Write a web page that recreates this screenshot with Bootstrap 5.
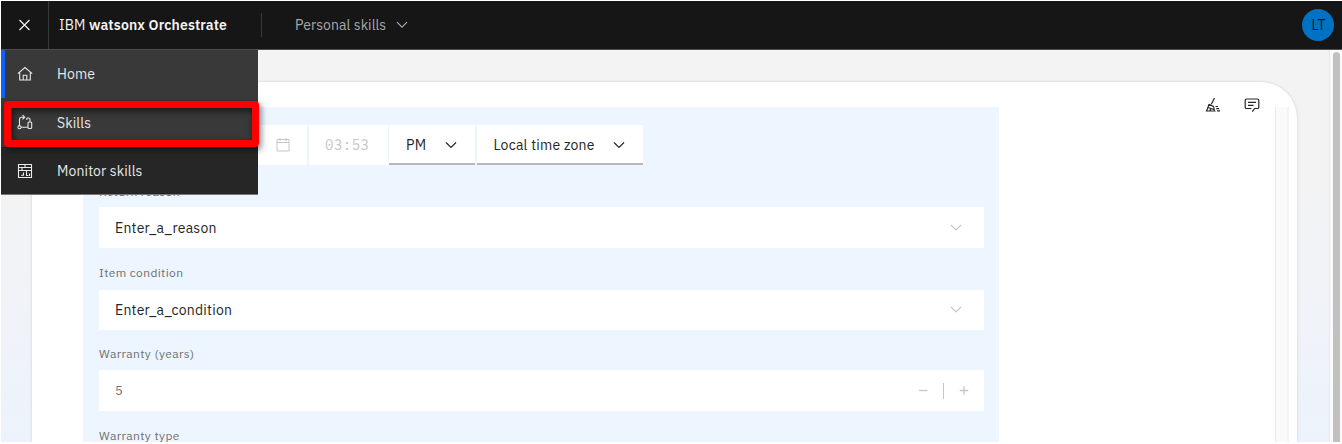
<!DOCTYPE html>
<html lang="en">
<head>
<meta charset="utf-8">
<meta name="viewport" content="width=device-width, initial-scale=1">
<title>IBM watsonx Orchestrate</title>
<link href="https://cdn.jsdelivr.net/npm/bootstrap@5.3.0/dist/css/bootstrap.min.css" rel="stylesheet">
<style>
body{font-family:"IBM Plex Sans",Roboto,"Liberation Sans",sans-serif;font-size:14px;line-height:18px;color:#262626;letter-spacing:.22px;overflow:hidden;background:#fff}
.shell{height:442px;padding:1px 0 0 1px;overflow:hidden}
.topbar{height:49px;background:#161616;border-bottom:1px solid #4d4d4d;color:#f4f4f4}
.close-cell{width:48px;height:48px;border-right:1px solid #393939}
.close-cell svg{margin-right:1px}
.brand-text{width:212px;padding:0 0 0 10px;letter-spacing:.15px}
.brand-text b{font-weight:600}
.rule{width:1px;height:24px;background:#393939}
.switcher{margin-left:33px;color:#a8a8a8;letter-spacing:.06px}
.switcher svg{margin-left:8px}
.avatar{width:32px;height:32px;background:#0072c3;color:#161616;margin-right:8px;font-size:14px;letter-spacing:0;padding-left:1px}
.stage{height:392px;background:linear-gradient(#f3f3f3,#f3f3f4 35%,#edf3fc)}
.chat{margin-left:31px;margin-top:32px;width:1265px;height:360px;background:#fff;border-radius:0 36px 0 0;box-shadow:0 0 3px rgba(0,0,0,.16)}
.form-panel{margin:25px 0 0 51px;width:916px;height:335px;padding:18px 15.5px 0 16px;background:#edf5ff}
.field{height:40.5px;background:#fff;padding:1px 16px 0}
.time-row .field{height:40px;padding-top:0}
.time-row .field.underlined{padding-top:2px}
.underlined{border-bottom:2px solid #b8b8b8}
.cap{font-size:12px;line-height:16px;color:#6f6f6f;letter-spacing:.38px}
.mono{font-family:"IBM Plex Mono","Liberation Mono",monospace;color:#c6c6c6;letter-spacing:.5px}
.pale{color:#c6c6c6}
.inner-track{width:14px;margin-top:25px;background:#fafafa;border-left:1px solid #ebebeb;border-right:2px solid #f3f3f3}
.outer-track{width:13px;background:#fafafa;border-left:1px solid #e8e8e8;padding:2px 0 0 3px}
.thumb{width:7px;height:390px;border-radius:4px 4px 0 0;background:#c1c1c1}
.side-menu{top:50px;left:1px;width:257px;height:145px;background:#262626;color:#e8e8e8;border-bottom:1px solid #777;letter-spacing:.12px}
.side-item{height:48.3px;padding-left:15.5px}
.side-item svg{margin-right:24.5px}
.side-item span{padding-top:1px}
.side-item.lit{background:#393939}
.side-item.current{box-shadow:inset 4px 0 #0f62fe}
.side-item.current span{padding-top:0}
.callout{left:4px;top:101px;width:255px;height:46px;border:7px solid #f00;border-radius:4px;box-shadow:2px 3px 6px rgba(0,0,0,.5),inset 2px 3px 7px rgba(0,0,0,.6)}
svg{display:block;flex:none;fill:none;stroke:currentColor}
</style>
</head>
<body>
<div class="shell position-relative">
  <header class="topbar d-flex align-items-center">
    <div class="close-cell d-flex align-items-center justify-content-center">
      <svg width="16" height="16" viewBox="0 0 16 16" stroke-width="1.2"><path d="M3.500 3l10 10M13.500 3L3.500 13"/></svg>
    </div>
    <div class="brand-text text-nowrap">IBM <b>watsonx Orchestrate</b></div>
    <div class="rule"></div>
    <div class="switcher d-flex align-items-center">Personal skills
      <svg width="16" height="16" viewBox="0 0 16 16" stroke-width="1.2"><path d="M3 5.2l5 5 5-5"/></svg>
    </div>
    <div class="avatar rounded-circle d-flex align-items-center justify-content-center ms-auto">LT</div>
  </header>

  <main class="stage d-flex">
    <section class="chat d-flex">
      <div class="form-panel">
        <div class="time-row d-flex">
          <div class="field d-flex align-items-center justify-content-end pale" style="width:208px">
            <svg width="16" height="16" viewBox="0 0 16 16"><path d="M2 2.500h12v11.500H2zM2 5.500h12M5 1v3.200M11 1v3.200"/></svg>
          </div>
          <div class="field d-flex align-items-center mono" style="width:79px;margin-left:2px">03:53</div>
          <div class="field underlined d-flex align-items-center justify-content-between" style="width:86px;margin-left:1px"><span style="padding-left:1px">PM</span>
            <svg width="16" height="16" viewBox="0 0 16 16" stroke-width="1.2"><path d="M3 5.5l5 5 5-5"/></svg>
          </div>
          <div class="field underlined d-flex align-items-center justify-content-between" style="width:166px;margin-left:2px"><span style="padding-left:.5px">Local time zone</span>
            <svg width="16" height="16" viewBox="0 0 16 16" stroke-width="1.2"><path d="M3 5.5l5 5 5-5"/></svg>
          </div>
        </div>
        <div class="cap" style="margin-top:19px">Return reason</div>
        <div class="field d-flex align-items-center justify-content-between" style="margin-top:7px"><span>Enter_a_reason</span>
          <svg class="pale" style="margin-right:4px" width="16" height="16" viewBox="0 0 16 16"><path d="M3 5l5 5 5-5" stroke-width="1.200"/></svg>
        </div>
        <div class="cap" style="margin-top:17.5px">Item condition</div>
        <div class="field d-flex align-items-center justify-content-between" style="margin-top:8.5px"><span>Enter_a_condition</span>
          <svg class="pale" style="margin-right:4px" width="16" height="16" viewBox="0 0 16 16"><path d="M3 5l5 5 5-5" stroke-width="1.200"/></svg>
        </div>
        <div class="cap" style="margin-top:15.5px">Warranty (years)</div>
        <div class="field d-flex align-items-center" style="margin-top:8.5px;color:#6f6f6f;font-size:13px">5
          <div class="d-flex align-items-center ms-auto pale" style="margin-right:-1px">
            <svg width="10" height="16" viewBox="0 0 10 16" stroke-width="1.3"><path d="M1 7.500h8.500"/></svg>
            <div style="width:1px;height:16px;background:#c6c6c6;margin:0 15px"></div>
            <svg width="10" height="16" viewBox="0 0 10 16" stroke-width="1.3"><path d="M.8 7.500h8.400M5 3.300v8.400"/></svg>
          </div>
        </div>
        <div class="cap" style="margin-top:17.5px">Warranty type</div>
      </div>
      <div class="ms-auto d-flex" style="margin-right:8px">
        <div class="inner-track"></div>
      </div>
    </section>
    <div class="outer-track ms-auto"><div class="thumb"></div></div>
  </main>

  <div class="position-absolute d-flex" style="left:1205px;top:97px;gap:23px;color:#262626">
    <svg width="16" height="16" viewBox="0 0 16 16" stroke-width="1.2"><path d="M9.500 1L6.300 7.200M3.800 7.200l5 2.400M3.800 7.200C3.500 10 2.300 11.700 1.500 14h8.300c-.8-1.300-1.100-2.700-1-4.400M3 10.500l5.800 2M5 13.800l.8-2M10.500 9.500h2.500M11.200 11.600h3M12 13.800h3"/></svg>
    <svg width="16" height="16" viewBox="0 0 16 16" stroke-width="1.2"><path d="M8.3 14.6l2.300-3.100h2.900q1.300 0 1.300-1.300V3.300Q14.800 2 13.500 2h-11Q1.200 2 1.200 3.300v6.900Q1.200 11.500 2.500 11.500H7.500M4 5.300h8M4 8.300h5.500"/></svg>
  </div>

  <nav class="side-menu position-absolute">
    <div class="side-item lit current d-flex align-items-center">
      <svg width="16" height="16" viewBox="0 0 16 16" stroke-width="1.1"><path d="M.8 7.700L8 1.500l7.200 6.200M2.700 6.200V14h10.600V6.200M6.200 14V9.300h3.600V14"/></svg><span>Home</span>
    </div>
    <div class="side-item lit d-flex align-items-center">
      <svg width="16" height="16" viewBox="0 0 16 16" stroke-width="1.1"><path d="M2.500 11.500V5.500Q2.500 3.200 4.800 3.200H7.300M5.500 1l2.200 2.200-2.200 2.200M4.200 13.200h6.600M9.800 4h1.700Q13 4 13 5.500V8M9.800 4v2"/><circle cx="2.500" cy="13.200" r="1.600"/><rect x="11" y="8" width="3.700" height="6.500" rx="1"/></svg><span>Skills</span>
    </div>
    <div class="side-item d-flex align-items-center">
      <svg width="16" height="16" viewBox="0 0 16 16" stroke-width="1.1"><path d="M1.500 1.500h13v13h-13zM1.500 4.500h13M1.500 7.500h13M8 1.500v3M5 4.500v3M4 12.300h2.500V9.500M9.500 7.500v5h1.800M12.500 10.500v2.500"/></svg><span>Monitor skills</span>
    </div>
  </nav>
  <div class="callout position-absolute"></div>
</div>
<script src="https://cdn.jsdelivr.net/npm/bootstrap@5.3.0/dist/js/bootstrap.bundle.min.js"></script>
</body>
</html>
